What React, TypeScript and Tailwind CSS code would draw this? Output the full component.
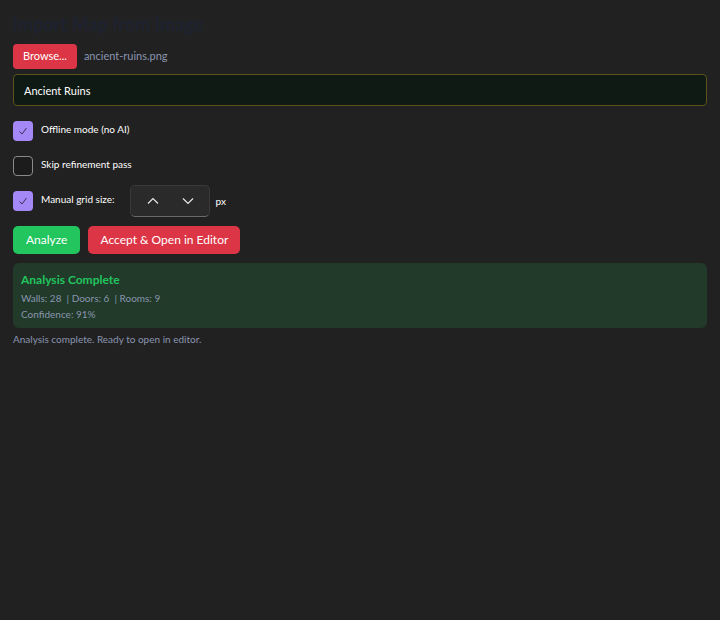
import React, { useState } from 'react'

const font = { fontFamily: 'Lato, "Open Sans", sans-serif' }

const CheckBox: React.FC<{ checked: boolean; onChange: () => void }> = ({ checked, onChange }) => (
  <button
    onClick={onChange}
    className={
      checked
        ? 'w-5 h-5 shrink-0 rounded-[4px] bg-[#a488f5] flex items-center justify-center'
        : 'w-5 h-5 shrink-0 rounded-[4px] border border-[#8a8a8a] bg-[#1c1c1c]'
    }
  >
    {checked && (
      <svg width="10" height="10" viewBox="0 0 10 10" fill="none">
        <path d="M1.5 5.5 L4 8 L8.5 2" stroke="#3b2f5a" strokeWidth="1" />
      </svg>
    )}
  </button>
)

export default function App() {
  const [offline, setOffline] = useState(true)
  const [skip, setSkip] = useState(false)
  const [manual, setManual] = useState(true)

  return (
    <div className="min-h-[620px] w-full bg-[#212121] px-[13px] pt-[12px]" style={font}>
      <h2 className="text-[18px] font-bold leading-[24px] text-[#1e2230]">Import Map from Image</h2>

      <div className="mt-[8px] flex items-center gap-[7px]">
        <button className="h-[25px] rounded-[4px] bg-[#dc3545] px-[10px] text-[11px] text-white">Browse...</button>
        <span className="text-[11px] text-[#8a95b0]">ancient-ruins.png</span>
      </div>

      <input
        defaultValue="Ancient Ruins"
        className="mt-[5px] block h-[32px] w-full rounded-[4px] border border-[#5e5119] bg-[#0f1a14] px-[10px] text-[11px] text-white outline-none"
      />

      <div className="mt-[15px] flex flex-col gap-[15px]">
        <label className="flex items-start gap-[8px]">
          <CheckBox checked={offline} onChange={() => setOffline(!offline)} />
          <span className="pt-[1px] text-[10px] leading-[14px] text-white">Offline mode (no AI)</span>
        </label>
        <label className="flex items-start gap-[8px]">
          <CheckBox checked={skip} onChange={() => setSkip(!skip)} />
          <span className="pt-[1px] text-[10px] leading-[14px] text-white">Skip refinement pass</span>
        </label>
        <div className="-mt-[6px] flex items-center gap-[6px]">
          <label className="flex items-start gap-[8px] self-center">
            <CheckBox checked={manual} onChange={() => setManual(!manual)} />
            <span className="pt-[1px] text-[10px] leading-[14px] text-white">Manual grid size:</span>
          </label>
          <div className="ml-[9px] flex h-[32px] w-[80px] items-center justify-between rounded-[5px] border border-[#3a3a3a] border-b-[#6a6a6a] bg-[#2a2a2a] pl-[16px] pr-[15px]">
            <svg width="12" height="8" viewBox="0 0 12 8" fill="none">
              <path d="M1 6.5 L6 1.5 L11 6.5" stroke="#e8e8e8" strokeWidth="1.2" />
            </svg>
            <svg width="12" height="8" viewBox="0 0 12 8" fill="none">
              <path d="M1 1.5 L6 6.5 L11 1.5" stroke="#e8e8e8" strokeWidth="1.2" />
            </svg>
          </div>
          <span className="mt-[1px] text-[10px] text-white">px</span>
        </div>
      </div>

      <div className="mt-[9px] flex gap-[8px]">
        <button className="h-[28px] rounded-[5px] bg-[#22c55e] px-[13px] text-[12px] text-white">Analyze</button>
        <button className="h-[28px] rounded-[5px] bg-[#dc3545] px-[12px] text-[12px] text-white">Accept &amp; Open in Editor</button>
      </div>

      <div className="mt-[9px] rounded-[6px] bg-[#213a2a] px-[8px] pb-[6px] pt-[9px]">
        <div className="text-[12px] font-bold leading-[16px] text-[#22c55e]">Analysis Complete</div>
        <div className="mt-[2px] text-[10px] leading-[16px] text-[#8a95b0]">Walls: 28 &nbsp;| Doors: 6 &nbsp;| Rooms: 9</div>
        <div className="text-[10px] leading-[16px] text-[#8a95b0]">Confidence: 91%</div>
      </div>

      <div className="mt-[4px] text-[10px] leading-[14px] text-[#8a95b0]">Analysis complete. Ready to open in editor.</div>
    </div>
  )
}
